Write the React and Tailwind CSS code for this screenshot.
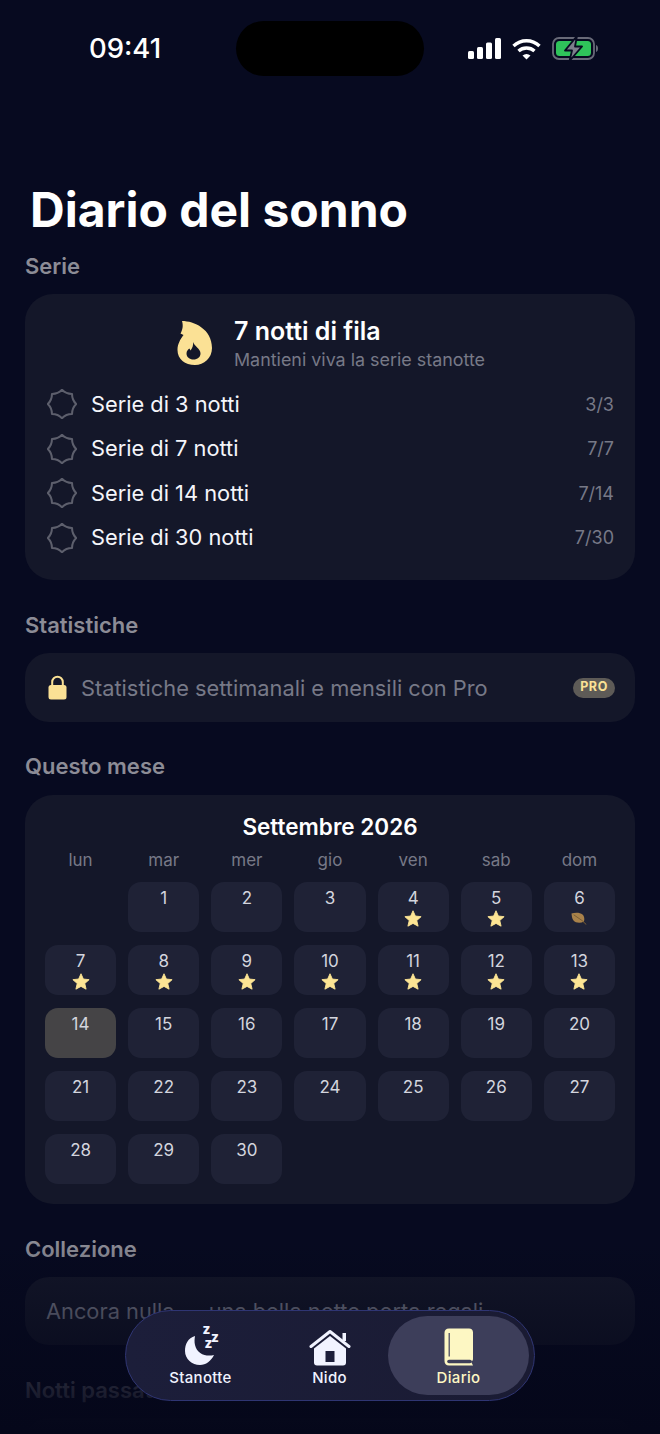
import React from "react";

const streaks = [
  { label: "Serie di 3 notti", value: "3/3" },
  { label: "Serie di 7 notti", value: "7/7" },
  { label: "Serie di 14 notti", value: "7/14" },
  { label: "Serie di 30 notti", value: "7/30" },
];

const weekdays = ["lun", "mar", "mer", "gio", "ven", "sab", "dom"];
const starDays = [4, 5, 7, 8, 9, 10, 11, 12, 13];

// eight tips joined by concave curves, used by the streak badges
const polar = (r, step) => {
  const a = (step * Math.PI) / 8 - Math.PI / 2;
  return `${(15 + r * Math.cos(a)).toFixed(2)} ${(15 + r * Math.sin(a)).toFixed(2)}`;
};
const sealPath =
  `M${polar(14.2, 0)}` +
  Array.from({ length: 8 }, (_, i) => `Q${polar(10.8, i * 2 + 1)} ${polar(14.2, i * 2 + 2)}`).join("") +
  "Z";

function Seal() {
  return (
    <svg width="30" height="30" viewBox="0 0 30 30" className="shrink-0">
      <path d={sealPath} fill="none" stroke="#5d5f6c" strokeWidth="2" strokeLinejoin="round" />
    </svg>
  );
}

function Star() {
  return (
    <svg width="18" height="17" viewBox="0 0 24 23" className="mt-[2px]">
      <path
        d="M12 1l3.2 7.2 7.8.8-5.9 5.2 1.8 7.7L12 18.1l-6.9 3.8 1.8-7.7L1 9l7.8-.8z"
        fill="#fde594"
        stroke="#fde594"
        strokeWidth="1.2"
        strokeLinejoin="round"
      />
    </svg>
  );
}

function Leaf() {
  return (
    <svg width="16" height="13" viewBox="0 0 16 13" className="mt-[4px]">
      <path d="M0.500 1.500C4 0.500 9 0.300 11.500 2.500C13.800 4.600 13.500 8 13 9.500C9.500 11.500 4.500 11 2.500 8.500C1 6.500 0.800 4 0.500 1.500Z" fill="#a9824a" />
      <path d="M3 3L11 8.500L15 12.300" fill="none" stroke="#7a5e36" strokeWidth="1" strokeLinecap="round" />
    </svg>
  );
}

function Flame() {
  return (
    <svg width="36" height="46" viewBox="0 0 36 46" className="-mt-[4px]">
      <path
        d="M5 1C17 1 35 9 35 28C35 38 27 45 18 45C8 45 0.500 39 0.500 30C0.500 24 3 20 6.500 15L3.500 13.500C5.500 10 6.500 6 5 1Z"
        fill="#fbe195"
      />
      <path d="M16 22C17 25.500 23.500 29 23.500 33.500C23.500 37 20.500 39.500 16.500 39.500C12.500 39.500 9.500 37 9.500 33.500C9.500 31 11 29.500 12.500 28.500L13.500 30.500C15.500 28 16.500 25 16 22Z" fill="#141729" />
    </svg>
  );
}

function Lock() {
  return (
    <svg width="19" height="25" viewBox="0 0 19 25">
      <path d="M4.200 11V7a5.300 5.300 0 0110.600 0v4" fill="none" stroke="#fbe195" strokeWidth="2" />
      <rect x="0.500" y="10" width="18" height="14.500" rx="2.500" fill="#fbe195" />
    </svg>
  );
}

function Signal() {
  return (
    <svg width="33" height="21" viewBox="0 0 33 21" fill="#fff">
      <rect x="0" y="13" width="6" height="8" rx="1.500" />
      <rect x="9" y="9" width="6" height="12" rx="1.500" />
      <rect x="18" y="4.500" width="6" height="16.500" rx="1.500" />
      <rect x="27" y="0" width="6" height="21" rx="1.500" />
    </svg>
  );
}

function Wifi() {
  return (
    <svg width="29" height="22" viewBox="0 0 29 22" fill="none" stroke="#fff" strokeWidth="3.400">
      <path d="M1.500 8C9 1 20 1 27.500 8" />
      <path d="M6.500 13C11 9 18 9 22.500 13" />
      <path d="M14.500 21.500L10.500 17.500C13 15.500 16 15.500 18.500 17.500Z" fill="#fff" stroke="none" />
    </svg>
  );
}

function Battery() {
  return (
    <svg width="46" height="23" viewBox="0 0 46 23">
      <rect x="1" y="1" width="41" height="21" rx="6" fill="none" stroke="#686a78" strokeWidth="1.800" />
      <rect x="4" y="4" width="35" height="15" rx="3.500" fill="#2fc35a" />
      <path d="M44 8c1.400.4 2 1.700 2 3.500s-.6 3.100-2 3.500z" fill="#686a78" />
      <path d="M25 -1L13 13.500H20L17.500 24L30 9.500H23Z" fill="#7d7e8b" stroke="#070a20" strokeWidth="1.800" strokeLinejoin="round" />
    </svg>
  );
}

function MoonIcon() {
  return (
    <svg width="38" height="42" viewBox="0 0 38 42" className="overflow-visible">
      <path d="M13 12C6 14 3 20 3 27C3 35 10 41 18 41C24 41 29 37 32 31C24 33 15 30 13 21C12.300 18 12.500 15 13 12Z" fill="#f1f3ff" />
      <text x="20.500 29 22.500" y="10 18 23.500" fontFamily="Inter, sans-serif" fontWeight="800" fontSize="13.500" fill="#f1f3ff">
        zzz
      </text>
    </svg>
  );
}

function HouseIcon() {
  return (
    <svg width="42" height="37" viewBox="0 0 42 37">
      <path d="M2 17.500L21 2.500L40 17.500" fill="none" stroke="#f1f3ff" strokeWidth="3" strokeLinecap="round" strokeLinejoin="round" />
      <rect x="33.500" y="4" width="3.500" height="8" fill="#f1f3ff" />
      <path d="M21 7L37 19.500V33.500C37 35.200 36 36.500 34 36.500H8C6 36.500 5 35.200 5 33.500V19.500Z" fill="#f1f3ff" />
      <rect x="16.500" y="22" width="9" height="11" fill="#1c1e3a" />
    </svg>
  );
}

function BookIcon() {
  return (
    <svg width="30" height="38" viewBox="0 0 30 38">
      <path d="M5 0.500H25C27.500 0.500 29 2 29 4.500V31C29 32.500 28 33.500 27 33.500L29 37.500H5C2 37.500 0.500 35.500 0.500 33V5C0.500 2 2 0.500 5 0.500Z" fill="#fdf7c3" />
      <path d="M5.200 5V28.500" stroke="#3d3e5a" strokeWidth="1.200" />
      <path d="M5 33.500H26" stroke="#3d3e5a" strokeWidth="3.600" strokeLinecap="round" />
    </svg>
  );
}

function SectionTitle({ children }) {
  return <h2 className="px-[25px] h-[28px] leading-[28px] text-[22px] font-semibold text-[#8c8c96]">{children}</h2>;
}

function DayCell({ day }) {
  const isToday = day === 14;
  return (
    <div
      className={`h-[50px] rounded-[13px] flex flex-col items-center text-[17px] leading-[20px] pt-[6px] text-[#d3d5de] ${
        isToday ? "bg-[#454446]" : "bg-[#1f2236]"
      }`}
    >
      <span>{day}</span>
      {starDays.includes(day) && <Star />}
      {day === 6 && <Leaf />}
    </div>
  );
}

function TabItem({ icon, label, active, className }) {
  return (
    <div
      className={`h-[79px] shrink-0 rounded-full flex flex-col items-center justify-end pb-[8px] gap-[3px] ${className} ${
        active ? "bg-[#3d3e5a] text-[#fdf7c3]" : "text-[#f1f3ff]"
      }`}
    >
      {icon}
      <span className="text-[15px] leading-[18px] font-medium tracking-[0.3px]">{label}</span>
    </div>
  );
}

export default function App() {
  return (
    <div className="relative w-[660px] h-[1434px] overflow-hidden bg-[#070a20] text-white font-['Inter',sans-serif]">
      {/* status bar */}
      <div className="grid grid-cols-[236px_188px_236px] pt-[21px]">
        <div className="flex items-center justify-center pl-[14px] text-[27.5px] font-medium">09:41</div>
        <div className="h-[55px] rounded-full bg-black" />
        <div className="flex items-center gap-[11px] pl-[44px]">
          <Signal />
          <Wifi />
          <Battery />
        </div>
      </div>

      <h1 className="mt-[105px] pl-[30px] h-[58px] leading-[58px] text-[48px] font-bold">Diario del sonno</h1>

      <div className="mt-[13px]">
        <SectionTitle>Serie</SectionTitle>
      </div>
      <div className="mx-[25px] mt-[14px] h-[286px] rounded-[28px] bg-[#141729] pl-[22px] pr-[21px] pt-[22px]">
        <div className="flex items-center justify-center gap-[21px] pl-[1px]">
          <Flame />
          <div>
            <div className="text-[25px] leading-[30px] font-semibold">7 notti di fila</div>
            <div className="text-[17.9px] leading-[28px] text-[#777987]">Mantieni viva la serie stanotte</div>
          </div>
        </div>
        <div className="mt-[8px] flex flex-col">
          {streaks.map((s) => (
            <div key={s.label} className="h-[44.5px] flex items-center gap-[14px]">
              <Seal />
              <span className="text-[21.8px] text-[#f4f5fa] flex-1">{s.label}</span>
              <span className="text-[18px] text-[#777987]">{s.value}</span>
            </div>
          ))}
        </div>
      </div>

      <div className="mt-[31px]">
        <SectionTitle>Statistiche</SectionTitle>
      </div>
      <div className="mx-[25px] mt-[14px] h-[69px] rounded-[24px] bg-[#141729] flex items-center pl-[23px] pr-[20px]">
        <Lock />
        <span className="ml-[14px] flex-1 text-[21.8px] pt-[1px] text-[#777987]">Statistiche settimanali e mensili con Pro</span>
        <span className="h-[20px] w-[42px] rounded-full bg-[#5e5b57] flex items-center justify-center text-[12.5px] font-bold tracking-[0.6px] text-[#fbe195]">
          PRO
        </span>
      </div>

      <div className="mt-[30px]">
        <SectionTitle>Questo mese</SectionTitle>
      </div>
      <div className="mx-[25px] mt-[15px] h-[409px] rounded-[28px] bg-[#141729] px-[20px] pt-[18px]">
        <div className="text-center text-[22.5px] leading-[28px] font-semibold">Settembre 2026</div>
        <div className="mt-[7px] grid grid-cols-7 gap-x-[12px]">
          {weekdays.map((d) => (
            <div key={d} className="text-center text-[17px] leading-[24px] text-[#777987]">
              {d}
            </div>
          ))}
        </div>
        <div className="mt-[10px] grid grid-cols-7 gap-x-[12px] gap-y-[13px]">
          <div />
          {Array.from({ length: 30 }, (_, i) => (
            <DayCell key={i} day={i + 1} />
          ))}
        </div>
      </div>

      <div className="mt-[31px]">
        <SectionTitle>Collezione</SectionTitle>
      </div>
      <div className="mx-[25px] mt-[14px] h-[68px] rounded-[24px] bg-[#141729] flex items-center px-[21px] text-[21.8px] text-[#777987]">
        Ancora nulla — una bella notte porta regali
      </div>

      <div className="mt-[31px]">
        <SectionTitle>Notti passate</SectionTitle>
      </div>
      <div className="mx-[25px] mt-[14px] h-[120px] rounded-[24px] bg-[#141729]" />

      {/* content fades out behind the tab bar */}
      <div className="absolute inset-x-0 bottom-0 h-[194px] bg-gradient-to-b from-[#05071a00] via-[#05071acc] via-[75%] to-[#05071a]" />

      <div className="absolute left-[125px] top-[1310px] w-[410px] h-[91px] rounded-full border-[1.5px] border-[#2f3573] bg-gradient-to-r from-[#1c1e3a] to-[#1a1b33] flex items-center pl-[11px]">
        <TabItem icon={<MoonIcon />} label="Stanotte" className="w-[127px]" />
        <TabItem icon={<HouseIcon />} label="Nido" className="w-[131px]" />
        <TabItem icon={<BookIcon />} label="Diario" active className="w-[141px] -ml-[7px]" />
      </div>
    </div>
  );
}
